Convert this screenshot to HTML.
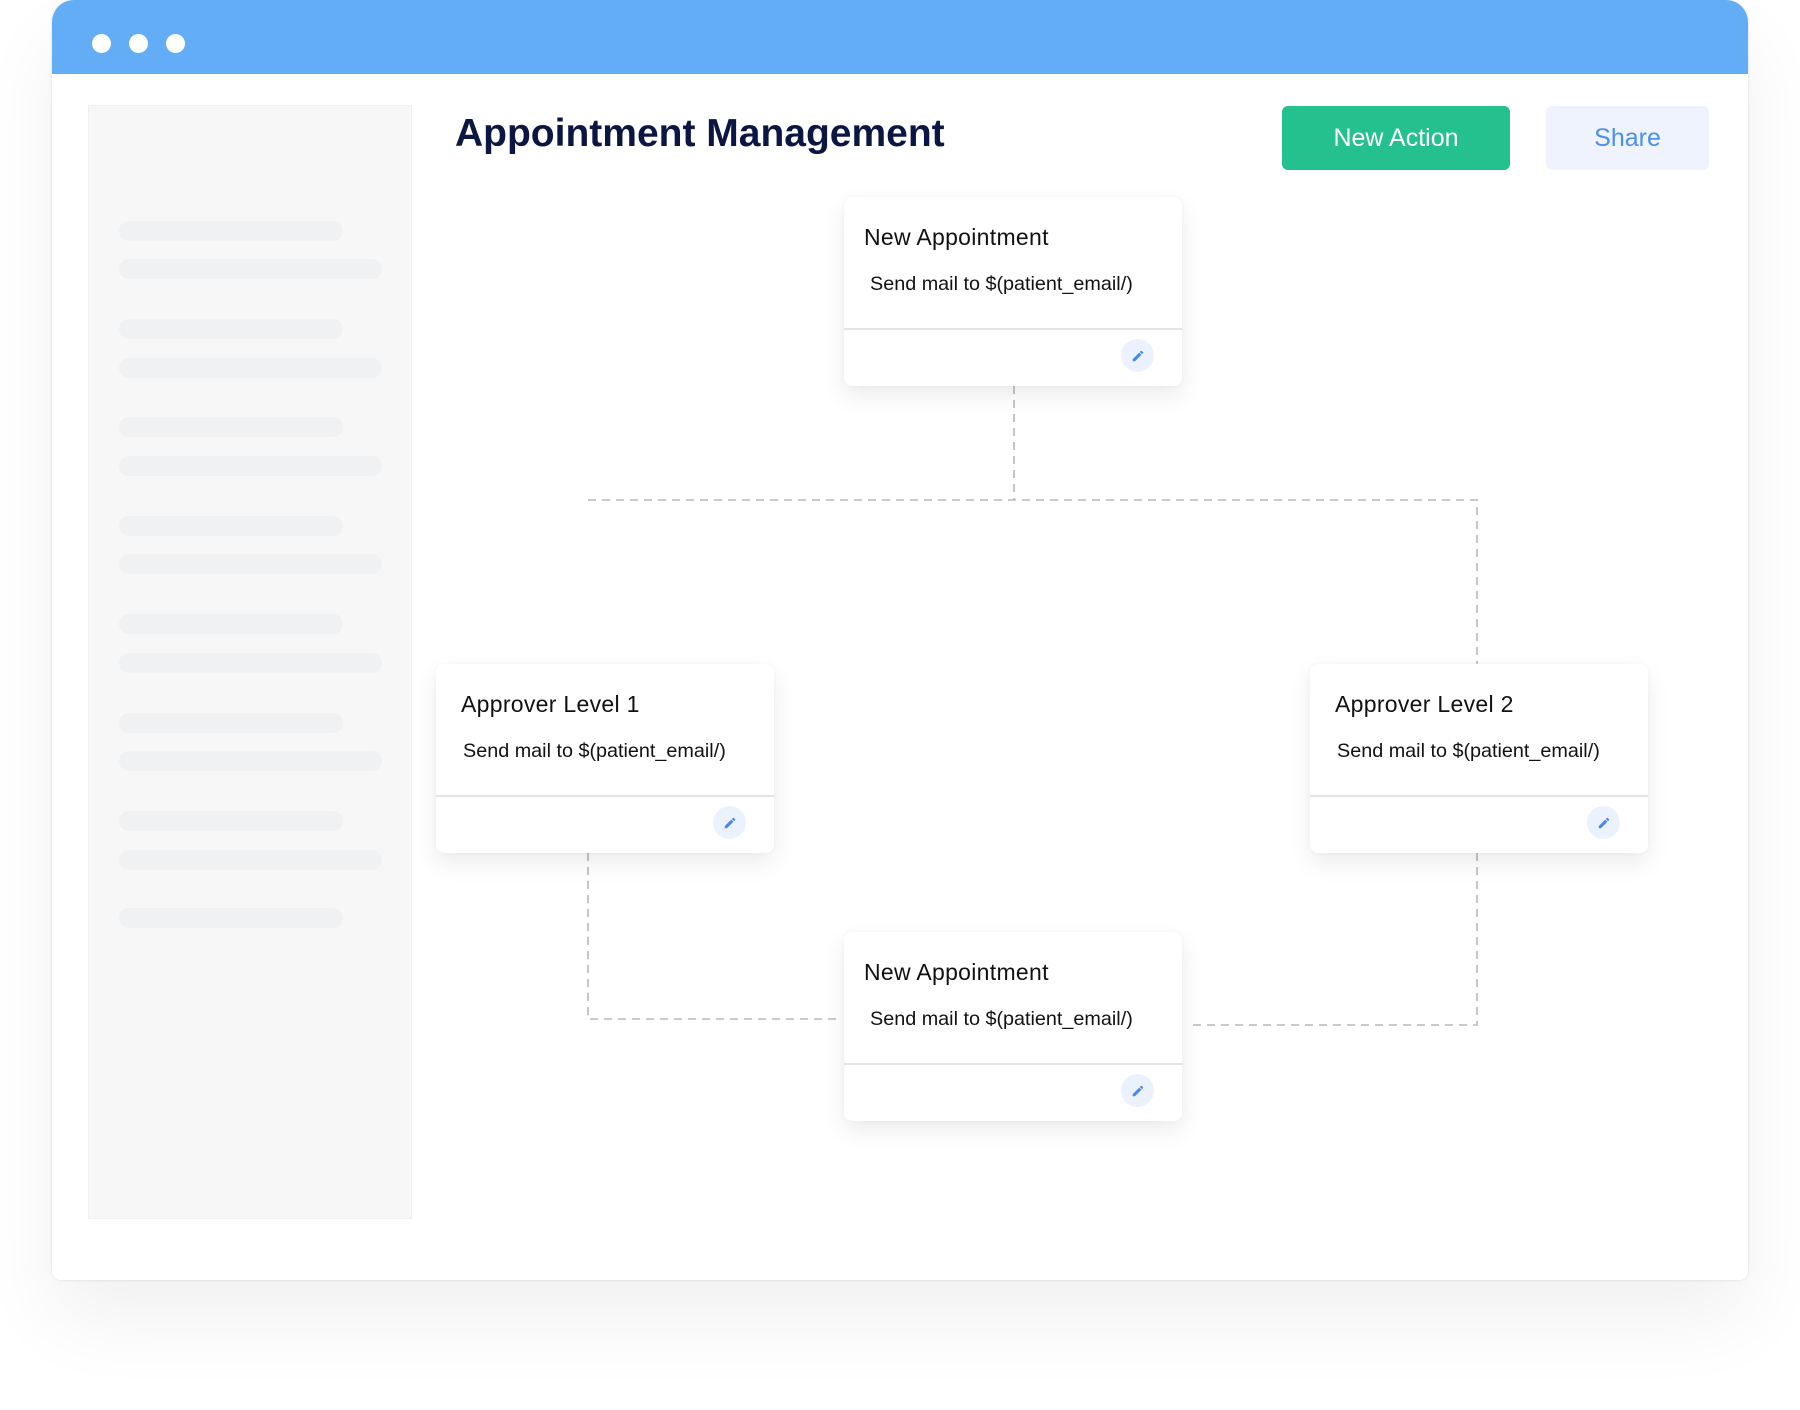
<!DOCTYPE html>
<html><head><meta charset="utf-8"><style>
*{margin:0;padding:0;box-sizing:border-box}
body{width:1800px;height:1410px;background:#fff;position:relative;overflow:hidden;font-family:"Liberation Sans",sans-serif}
.win{position:absolute;left:52px;top:0;width:1696px;height:1280px;background:#fff;border-radius:22px 22px 8px 8px;box-shadow:0 40px 80px rgba(0,0,0,0.06),0 0 3px rgba(0,0,0,0.12);overflow:hidden}
.bar{position:absolute;left:0;top:0;width:100%;height:74px;background:#63adf7}
.dot{position:absolute;top:34px;width:19px;height:19px;border-radius:50%;background:#fff}
.side{position:absolute;left:88px;top:105px;width:324px;height:1114px;background:#f7f7f7;border:1px solid #eef0f2}
.sk{position:absolute;left:119px;height:20px;border-radius:10px;background:#f0f1f3}
h1{position:absolute;left:455px;top:112px;font-size:39px;font-weight:bold;color:#0c1642;letter-spacing:0px}
.btn{position:absolute;top:106px;height:64px;border-radius:6px;font-size:25px;display:flex;align-items:center;justify-content:center}
.card{position:absolute;width:338px;height:189px;background:#fff;border-radius:8px;box-shadow:0 10px 24px rgba(0,0,0,0.08),0 0 4px rgba(0,0,0,0.04)}
.card .t{position:absolute;left:20px;top:27px;font-size:23px;letter-spacing:0.3px;color:#111}
.card .s{position:absolute;left:26px;top:76px;font-size:19.8px;color:#111}
.card.a .t{left:25px}.card.a .s{left:27px}
.card .hr{position:absolute;left:0;right:0;top:131px;height:2px;background:#e4e4e4}
.card .p{position:absolute;left:277px;top:142px;width:33px;height:33px;border-radius:50%;background:#ebf2fe;display:flex;align-items:center;justify-content:center}
svg.l{position:absolute;left:0;top:0}
</style></head><body>
<div class="win">
<div class="bar"><div class="dot" style="left:40px"></div><div class="dot" style="left:77px"></div><div class="dot" style="left:114px"></div></div>
</div>
<div class="side"></div>
<div class="sk" style="top:221px;width:224px"></div><div class="sk" style="top:259px;width:263px"></div>
<div class="sk" style="top:319px;width:224px"></div><div class="sk" style="top:358px;width:263px"></div>
<div class="sk" style="top:417px;width:224px"></div><div class="sk" style="top:456px;width:263px"></div>
<div class="sk" style="top:516px;width:224px"></div><div class="sk" style="top:554px;width:263px"></div>
<div class="sk" style="top:614px;width:224px"></div><div class="sk" style="top:653px;width:263px"></div>
<div class="sk" style="top:713px;width:224px"></div><div class="sk" style="top:751px;width:263px"></div>
<div class="sk" style="top:811px;width:224px"></div><div class="sk" style="top:850px;width:263px"></div>
<div class="sk" style="top:908px;width:224px"></div>
<h1>Appointment Management</h1>
<div class="btn" style="left:1282px;width:228px;background:#24c08e;color:#fff">New Action</div>
<div class="btn" style="left:1546px;width:163px;background:#eef3fe;color:#4a90f0">Share</div>
<svg class="l" width="1800" height="1410"><g stroke="#b8b8b8" stroke-width="1.6" stroke-dasharray="8 6" fill="none">
<path d="M1014 386V500M588 500H1477V664M588 853V1019H838M1477 853V1025H1192"/></g></svg>
<div class="card" style="left:844px;top:197px"><div class="t">New Appointment</div><div class="s">Send mail to $(patient_email/)</div><div class="hr"></div><div class="p"><svg width="14" height="14" viewBox="0 0 24 24"><path fill="#4a86ef" d="M3 17.25V21h3.75L17.8 9.94l-3.75-3.75L3 17.25zM20.7 7.04a1 1 0 000-1.41l-2.34-2.34a1 1 0 00-1.41 0l-1.83 1.83 3.75 3.75 1.83-1.83z"/></svg></div></div>
<div class="card a" style="left:436px;top:664px"><div class="t">Approver Level 1</div><div class="s">Send mail to $(patient_email/)</div><div class="hr"></div><div class="p"><svg width="14" height="14" viewBox="0 0 24 24"><path fill="#4a86ef" d="M3 17.25V21h3.75L17.8 9.94l-3.75-3.75L3 17.25zM20.7 7.04a1 1 0 000-1.41l-2.34-2.34a1 1 0 00-1.41 0l-1.83 1.83 3.75 3.75 1.83-1.83z"/></svg></div></div>
<div class="card a" style="left:1310px;top:664px"><div class="t">Approver Level 2</div><div class="s">Send mail to $(patient_email/)</div><div class="hr"></div><div class="p"><svg width="14" height="14" viewBox="0 0 24 24"><path fill="#4a86ef" d="M3 17.25V21h3.75L17.8 9.94l-3.75-3.75L3 17.25zM20.7 7.04a1 1 0 000-1.41l-2.34-2.34a1 1 0 00-1.41 0l-1.83 1.83 3.75 3.75 1.83-1.83z"/></svg></div></div>
<div class="card" style="left:844px;top:932px"><div class="t">New Appointment</div><div class="s">Send mail to $(patient_email/)</div><div class="hr"></div><div class="p"><svg width="14" height="14" viewBox="0 0 24 24"><path fill="#4a86ef" d="M3 17.25V21h3.75L17.8 9.94l-3.75-3.75L3 17.25zM20.7 7.04a1 1 0 000-1.41l-2.34-2.34a1 1 0 00-1.41 0l-1.83 1.83 3.75 3.75 1.83-1.83z"/></svg></div></div>
</body></html>
